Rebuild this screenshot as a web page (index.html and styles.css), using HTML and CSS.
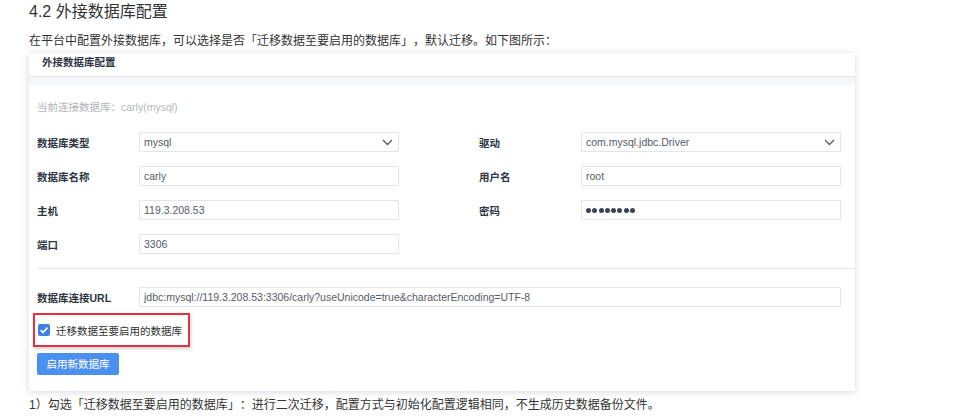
FILE: index.html
```html
<!DOCTYPE html>
<html lang="zh-CN">
<head>
<meta charset="utf-8">
<title>外接数据库配置</title>
<link rel="stylesheet" href="styles.css">
</head>
<body>
<div class="page">
  <h2 class="title">4.2 外接数据库配置</h2>
  <p class="intro">在平台中配置外接数据库，可以选择是否「迁移数据至要启用的数据库」，默认迁移。如下图所示：</p>

  <div class="card">
    <div class="card-head">外接数据库配置</div>
    <div class="band"></div>
    <div class="card-body">
      <div class="current">当前连接数据库：carly(mysql)</div>

      <div class="grid">
        <div class="field">
          <span class="label">数据库类型</span>
          <div class="input select">
            <span>mysql</span>
            <svg class="chev" width="11" height="7" viewBox="0 0 11 7"><path d="M1 1 L5.5 5.5 L10 1" fill="none" stroke="#555c68" stroke-width="1.3"/></svg>
          </div>
        </div>
        <div class="field">
          <span class="label">驱动</span>
          <div class="input select">
            <span>com.mysql.jdbc.Driver</span>
            <svg class="chev" width="11" height="7" viewBox="0 0 11 7"><path d="M1 1 L5.5 5.5 L10 1" fill="none" stroke="#555c68" stroke-width="1.3"/></svg>
          </div>
        </div>
        <div class="field">
          <span class="label">数据库名称</span>
          <div class="input"><span>carly</span></div>
        </div>
        <div class="field">
          <span class="label">用户名</span>
          <div class="input"><span>root</span></div>
        </div>
        <div class="field">
          <span class="label">主机</span>
          <div class="input"><span>119.3.208.53</span></div>
        </div>
        <div class="field">
          <span class="label">密码</span>
          <div class="input"><span class="dots"><i></i><i></i><i></i><i></i><i></i><i></i><i></i><i></i></span></div>
        </div>
        <div class="field">
          <span class="label">端口</span>
          <div class="input"><span>3306</span></div>
        </div>
      </div>

      <div class="divider"></div>

      <div class="field url">
        <span class="label">数据库连接URL</span>
        <div class="input wide"><span>jdbc:mysql://119.3.208.53:3306/carly?useUnicode=true&amp;characterEncoding=UTF-8</span></div>
      </div>

      <div class="check-row">
        <span class="checkbox">
          <svg width="12" height="12" viewBox="0 0 12 12"><path d="M2.6 6.2 L5 8.5 L9.5 3.6" fill="none" stroke="#fff" stroke-width="1.6"/></svg>
        </span>
        <span class="check-label">迁移数据至要启用的数据库</span>
      </div>

      <div class="btn">启用新数据库</div>
    </div>
  </div>

  <p class="note">1）勾选「迁移数据至要启用的数据库」：进行二次迁移，配置方式与初始化配置逻辑相同，不生成历史数据备份文件。</p>
</div>
</body>
</html>
```

FILE: styles.css
```css
* { box-sizing: border-box; }

body {
  margin: 0;
  background: #fff;
  font-family: "Liberation Sans", "Noto Sans CJK SC", sans-serif;
  color: #333;
  text-spacing-trim: space-all;
}

.page {
  padding-left: 29px;
}

.title {
  margin: 2px 0 0;
  font-size: 16px;
  font-weight: normal;
  line-height: 20px;
  color: #333;
}

.intro {
  margin: 10px 0 0;
  font-size: 12px;
  line-height: 18px;
  color: #333;
}

.card {
  margin-top: 3px;
  width: 826px;
  background: #fff;
  box-shadow: 0 1px 7px rgba(0, 0, 0, 0.16);
}

.card-head {
  height: 24px;
  padding: 2px 0 0 13px;
  border-bottom: 1px solid #e3e5e9;
  font-size: 10.5px;
  line-height: 14px;
  font-weight: bold;
  color: #2f3542;
}

.band {
  height: 8px;
  background: #f5f6f8;
}

.card-body {
  padding: 0 0 16px 8px;
}

.current {
  margin-top: 15px;
  font-size: 10.5px;
  line-height: 14px;
  color: #b4b6ba;
}

.grid {
  margin-top: 18px;
  width: 804px;
  display: grid;
  grid-template-columns: 362px 362px;
  column-gap: 80px;
  row-gap: 14px;
}

.field {
  display: flex;
  align-items: center;
  height: 20px;
}

.label {
  flex: 0 0 102px;
  font-size: 10.5px;
  font-weight: bold;
  color: #2f3542;
}

.input {
  flex: 1;
  height: 20px;
  display: flex;
  align-items: center;
  justify-content: space-between;
  padding: 0 5px 0 4px;
  border: 1px solid #e2e4e8;
  border-radius: 1px;
  font-size: 10.5px;
  color: #555b66;
  background: #fff;
}

.chev { display: block; }

.dots {
  display: flex;
  gap: 1.3px;
}

.dots i {
  display: block;
  width: 5px;
  height: 5px;
  border-radius: 50%;
  background: #3b4250;
}

.divider {
  margin-top: 14px;
  border-top: 1px solid #e6e8eb;
}

.url {
  margin-top: 18px;
  width: 804px;
}

.check-row {
  margin: 6px 0 0 -4px;
  display: inline-flex;
  align-items: center;
  height: 34px;
  padding: 0 6px 0 3px;
  border: 2px solid #e5313d;
  box-shadow: 1px 2px 3px rgba(0, 0, 0, 0.18);
}

.checkbox {
  width: 12px;
  height: 12px;
  border-radius: 2px;
  background: #3d7fe3;
  display: flex;
}

.check-label {
  margin-left: 6px;
  font-size: 10.5px;
  color: #333;
}

.btn {
  margin-top: 6px;
  width: 82px;
  height: 22px;
  border-radius: 2px;
  background: #4b90ef;
  color: #fff;
  font-size: 10.5px;
  line-height: 22px;
  text-align: center;
}

.note {
  margin: 5px 0 0;
  font-size: 12px;
  line-height: 18px;
  color: #333;
}
```
